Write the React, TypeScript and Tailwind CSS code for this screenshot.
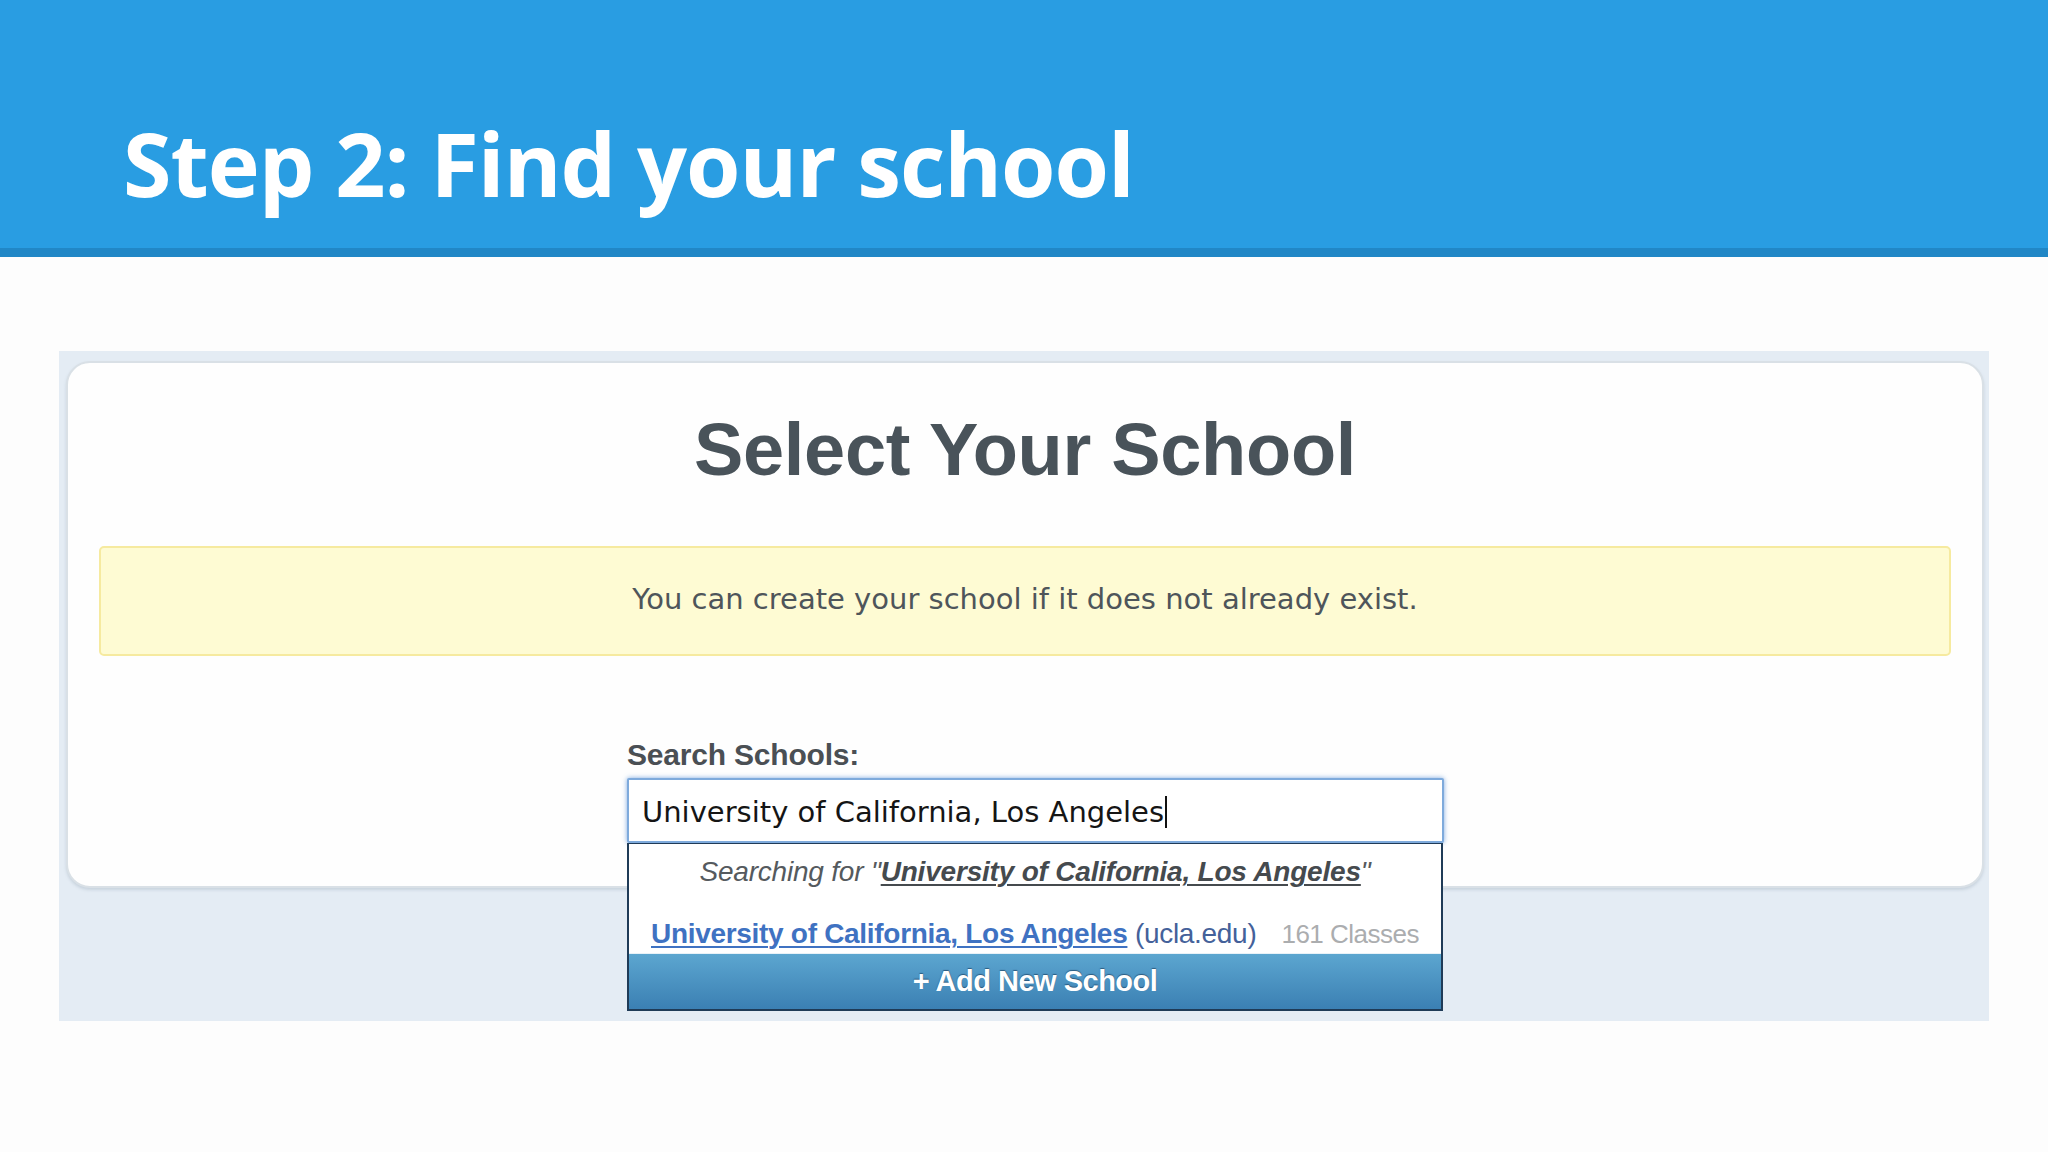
import React from 'react';

export default function App() {
  return (
    <div className="w-[2048px] h-[1152px] bg-[#fdfdfd] overflow-hidden">
      {/* slide header */}
      <div className="h-[248px] bg-[#299de2] pl-[123px] pt-[119px]">
        <h1 className="font-['Open_Sans',sans-serif] font-bold text-[88px] leading-none text-white tracking-[-1px]">
          Step 2: Find your school
        </h1>
      </div>
      <div className="h-[9px] bg-[#2187c6]" />

      {/* screenshot of the school picker */}
      <div className="mt-[94px] mx-[59px] h-[670px] bg-[#e4ecf4] pl-[7px] pr-[5px] pt-[10px]">
        <div className="h-[527px] bg-[#fefefe] rounded-[24px] border-2 border-[#d9e0e6] shadow-[0_2px_3px_rgba(120,140,160,0.25)] pt-[50px]">
          <h2 className="text-center font-['Liberation_Sans',Arial,sans-serif] font-bold text-[74px] leading-none text-[#49535a] tracking-[-0.3px]">
            Select Your School
          </h2>

          <div className="mx-[31px] mt-[59px] h-[110px] bg-[#fefbd3] border-2 border-[#f6ea9f] rounded-[5px] flex items-center justify-center pb-[3px]">
            <p className="font-['DejaVu_Sans',sans-serif] text-[29px] text-[#4e555a]">
              You can create your school if it does not already exist.
            </p>
          </div>

          <div className="ml-[559px] w-[817px] mt-[84px] relative">
            <label className="block font-['Liberation_Sans',Arial,sans-serif] font-bold text-[30px] leading-none text-[#4a4f54] tracking-[-0.2px]">
              Search Schools:
            </label>
            <div className="mt-[8px] h-[65px] border-2 border-[#7eaadc] rounded-[2px] bg-white shadow-[0_0_5px_rgba(82,140,215,0.75)] flex items-center pl-[13px] pt-[3px]">
              <span className="font-['DejaVu_Sans',sans-serif] text-[29px] text-[#151515] leading-[34px]">
                University of California, Los Angeles
              </span>
              <span className="w-[2px] h-[32px] bg-[#111] ml-[1px]" />
            </div>

            {/* autocomplete dropdown */}
            <div className="absolute left-0 top-full w-[816px] z-10 bg-white border-x-2 border-b-2 border-t border-[#1f3b57] font-['Liberation_Sans',Arial,sans-serif]">
              <div className="pt-[14px] text-center italic text-[28px] leading-none text-[#555a5e] tracking-[-0.2px]">
                Searching for "
                <span className="font-bold underline decoration-2 underline-offset-[3px] text-[#454a4e]">
                  University of California, Los Angeles
                </span>
                "
              </div>
              <div className="mt-[34px] pl-[22px] pr-[22px] flex justify-between items-baseline text-[28px] leading-none tracking-[-0.3px] pb-[5px]">
                <div>
                  <span className="font-bold text-[#3f72c2] underline decoration-2 underline-offset-[3px]">
                    University of California, Los Angeles
                  </span>
                  <span className="text-[#44619a]"> (ucla.edu)</span>
                </div>
                <span className="text-[#abadaf] text-[26px] tracking-[-0.5px]">161 Classes</span>
              </div>
              <div className="h-[56px] bg-gradient-to-b from-[#5ca6d0] to-[#3b80b3] border-t border-[#e8f2f8] flex items-center justify-center">
                <span className="font-bold text-[29px] text-white tracking-[-0.5px] [text-shadow:0_-1px_1px_rgba(20,50,80,0.6)]">
                  + Add New School
                </span>
              </div>
            </div>
          </div>
        </div>
      </div>
    </div>
  );
}
